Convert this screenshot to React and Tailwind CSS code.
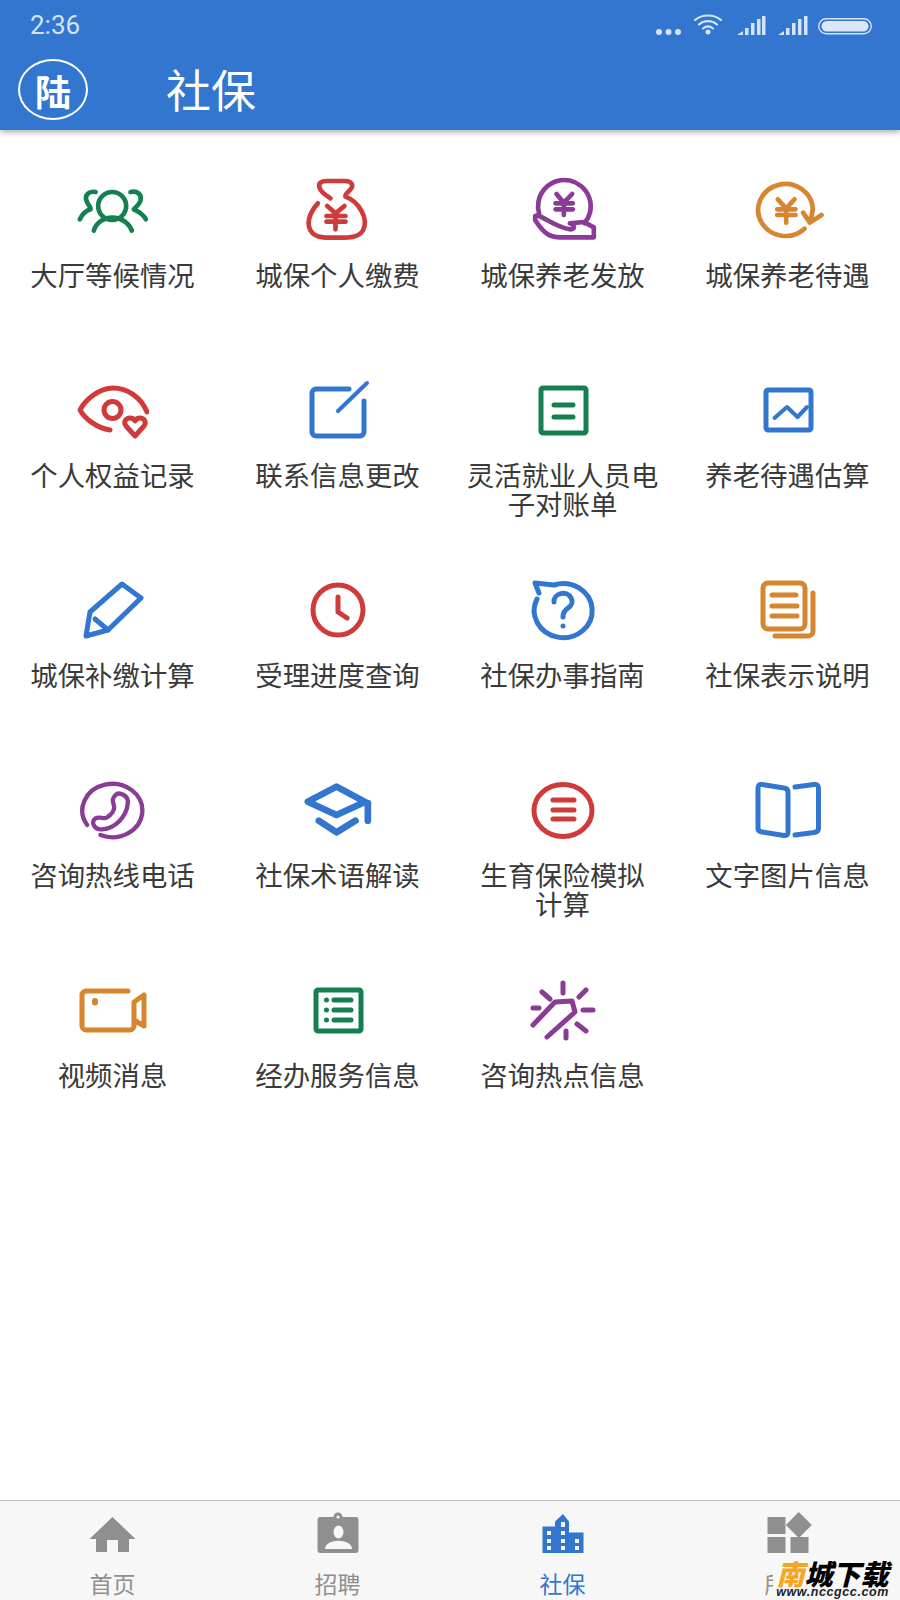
import React from 'react';

const GREEN = '#14804f';
const RED = '#cf3a3a';
const PURPLE = '#8a3b96';
const ORANGE = '#d5862f';
const BLUE = '#3276d0';

const Icon = ({ color, width = 5, box = '0 0 72 72', children }) => (
  <svg
    width="72"
    height="72"
    viewBox={box}
    fill="none"
    stroke={color}
    strokeWidth={width}
    strokeLinecap="round"
    strokeLinejoin="round"
  >
    {children}
  </svg>
);

const items = [
  {
    label: '大厅等候情况',
    icon: (
      <Icon color={GREEN} width={14} box="49.5 15 216 216">
        <circle cx="155" cy="108" r="42" />
        <path d="M100 182C115 130 195 130 214 182" />
        <path d="M105 66C85 62 72 75 78 92C82 105 92 112 90 118C78 122 65 132 58 148" />
        <path d="M210 66C230 62 245 72 240 92C236 105 225 112 220 118C235 125 250 135 256 148" />
      </Icon>
    ),
  },
  {
    label: '城保个人缴费',
    icon: (
      <Icon color={RED} width={14} box="724.5 15 216 216">
        <path d="M772 100C745 130 735 165 755 188C770 205 800 203 830 203C860 203 895 205 908 180C925 145 895 95 855 80C850 70 878 60 875 45C872 32 860 33 850 33H800C780 33 772 40 778 55C782 68 800 78 810 85" />
        <path d="M800 108L825 130L852 108M798 138H855M798 155H855M825 130V178" />
      </Icon>
    ),
  },
  {
    label: '城保养老发放',
    icon: (
      <Icon color={PURPLE} width={14} box="19.5 15 216 216">
        <path d="M56 132A79 79 0 1 1 192 160" />
        <path d="M44 138C60 130 100 172 150 178C165 178 162 164 148 160L190 156L220 172V202H120C90 202 70 192 44 150Z" />
        <path d="M108 72L130 98L155 72M105 100H157M105 118H157M130 98V135" />
      </Icon>
    ),
  },
  {
    label: '城保养老待遇',
    icon: (
      <Icon color={ORANGE} width={14} box="694.5 15 216 216">
        <path d="M852 176A82 78 0 1 1 877 118L870 155" />
        <path d="M848 128L868 158L903 135" />
        <path d="M772 88L797 115L822 88M770 118H825M770 135H825M797 115V158" />
      </Icon>
    ),
  },
  {
    label: '个人权益记录',
    icon: (
      <Icon color={RED}>
        <path d="M70 37C64 22 50 13 36 13C22 13 8 25 3 35C8 44 20 53 33 55" />
        <circle cx="35.5" cy="35" r="8.5" />
        <path d="M58 61L49 51C46 47 49 43 53 43C55 43 57 44 58 46C59 44 61 43 63 43C67 43 70 47 67 51Z" />
      </Icon>
    ),
  },
  {
    label: '联系信息更改',
    icon: (
      <Icon color={BLUE}>
        <path d="M47 14H14A4 4 0 0 0 10 18V57A4 4 0 0 0 14 61H58A4 4 0 0 0 62 57V26" />
        <path d="M65 8L36 36" strokeWidth="4" />
      </Icon>
    ),
  },
  {
    label: '灵活就业人员电\n子对账单',
    icon: (
      <Icon color={GREEN}>
        <rect x="14" y="13" width="45" height="45" rx="2" />
        <path d="M27 30H46M27 42H46" />
      </Icon>
    ),
  },
  {
    label: '养老待遇估算',
    icon: (
      <Icon color={BLUE}>
        <rect x="14" y="15" width="45" height="40" rx="2" />
        <path d="M22.5 43L35 32L45.5 42L55 32" strokeWidth="4" />
      </Icon>
    ),
  },
  {
    label: '城保补缴计算',
    icon: (
      <Icon color={BLUE}>
        <path d="M45 9L64 23L31 55L9 61L13 37Z" />
        <path d="M18 44L31 55" />
      </Icon>
    ),
  },
  {
    label: '受理进度查询',
    icon: (
      <Icon color={RED}>
        <circle cx="36" cy="35" r="25" />
        <path d="M36 22V37L45 43" />
      </Icon>
    ),
  },
  {
    label: '社保办事指南',
    icon: (
      <Icon color={BLUE}>
        <path d="M10 24A29 27 0 1 0 27 10L8 8L12 18" />
        <path d="M27 27A9 8 0 1 1 41 33C38 35 36 37 36 42" />
        <path d="M36 51V51.1" />
      </Icon>
    ),
  },
  {
    label: '社保表示说明',
    icon: (
      <Icon color={ORANGE}>
        <rect x="11" y="8" width="42" height="46" rx="5" />
        <path d="M20 20H44M20 31H45M20 41H45" />
        <path d="M61 18V56A5 5 0 0 1 56 61H23" />
      </Icon>
    ),
  },
  {
    label: '咨询热线电话',
    icon: (
      <Icon color={PURPLE} width={13} box="49.5 15 216 216">
        <path d="M80 165A90 80 0 1 1 120 195" />
        <path d="M165 75C175 65 205 75 202 100C198 140 165 175 125 178C100 180 90 155 105 145C118 138 130 150 140 142C150 135 165 120 160 105C155 92 155 85 165 75Z" />
      </Icon>
    ),
  },
  {
    label: '社保术语解读',
    icon: (
      <Icon color={BLUE} width={20} box="724.5 15 216 216">
        <path d="M922 100L828 50L742 95L828 135L905 100" />
        <path d="M922 100V152" />
        <path d="M775 152L828 187L885 152" />
      </Icon>
    ),
  },
  {
    label: '生育保险模拟\n计算',
    icon: (
      <Icon color={RED}>
        <ellipse cx="36" cy="35.5" rx="29" ry="26" />
        <path d="M26 25H47M26 35H47M26 44H47" strokeWidth="5" />
      </Icon>
    ),
  },
  {
    label: '文字图片信息',
    icon: (
      <Icon color={BLUE}>
        <path d="M6 13Q6 9 10 9.5L32 13Q36 13.5 36 17V57Q36 61 32 60.5L10 57Q6 56.5 6 53Z" />
        <path d="M43 12L62 9.5Q66.5 9 66.5 13V53Q66.5 57 62 57.5L43 60" />
      </Icon>
    ),
  },
  {
    label: '视频消息',
    icon: (
      <Icon color={ORANGE}>
        <path d="M51 16H9A4 4 0 0 0 5 20V51A4 4 0 0 0 9 55H53A4 4 0 0 0 57 51V27L67 20V51L57 45" />
        <path d="M18 26V27.5" strokeWidth="6" />
      </Icon>
    ),
  },
  {
    label: '经办服务信息',
    icon: (
      <Icon color={GREEN}>
        <rect x="14" y="15" width="45" height="41" rx="2" />
        <path d="M24.5 25V25.1M24.5 35V35.1M24.5 45V45.1" />
        <path d="M32 25H49M32 35H49M32 45H49" />
      </Icon>
    ),
  },
  {
    label: '咨询热点信息',
    icon: (
      <Icon color={PURPLE}>
        <path d="M36 8V18M15 17L23 24M59 15L52 22M6 33H12M56 35H66M50 49L59 56M39 56V63" />
        <path d="M6 50L28 27L45 26L48 37L20 62" />
      </Icon>
    ),
  },
];

const HomeTab = ({ color }) => (
  <svg width="50" height="42" viewBox="0 0 50 42" fill={color}>
    <path d="M24.5 5L47.5 27H41V40H30V28H19V40H8V27H1.5Z" />
  </svg>
);

const JobTab = ({ color }) => (
  <svg width="50" height="42" viewBox="0 0 50 42">
    <circle cx="25" cy="5" r="4.5" fill={color} />
    <rect x="4.5" y="5" width="41" height="36" rx="3" fill={color} />
    <circle cx="25" cy="5" r="1.6" fill="#f7f7f7" />
    <ellipse cx="25.5" cy="20" rx="5" ry="6.5" fill="#f7f7f7" />
    <path d="M12 37C12 26 39 26 39 37Z" fill="#f7f7f7" />
  </svg>
);

const BuildingTab = ({ color }) => (
  <svg width="50" height="42" viewBox="0 0 50 42">
    <path d="M25 2L31 9.5V20.5H45.5V41H4.5V14.5H17V9.5Z" fill={color} />
    <g fill="#f7f7f7">
      <rect x="23" y="10" width="4" height="5" />
      <rect x="9" y="19" width="4" height="4" />
      <rect x="23" y="19" width="4" height="4" />
      <rect x="9" y="27" width="4" height="4" />
      <rect x="23" y="27" width="4" height="4" />
      <rect x="37" y="27" width="4" height="4" />
      <rect x="9" y="34" width="4" height="4" />
      <rect x="23" y="34" width="4" height="4" />
      <rect x="37" y="34" width="4" height="4" />
    </g>
  </svg>
);

const AppsTab = ({ color }) => (
  <svg width="50" height="42" viewBox="0 0 50 42" fill={color}>
    <rect x="4.5" y="5" width="18" height="17" />
    <rect x="4.5" y="25" width="18" height="16" />
    <rect x="27.5" y="25" width="18" height="16" />
    <path d="M35.8 0L48.8 13L35.8 26L22.8 13Z" />
  </svg>
);

const tabs = [
  { label: '首页', Tab: HomeTab },
  { label: '招聘', Tab: JobTab },
  { label: '社保', Tab: BuildingTab, active: true },
  { label: '所有', Tab: AppsTab },
];

const StatusIcons = () => (
  <svg width="220" height="24" viewBox="0 0 220 24" className="mr-[24px] mt-[-2px]">
    <g fill="#d5e3f6">
      <circle cx="3" cy="20" r="3" />
      <circle cx="12.5" cy="20" r="3" />
      <circle cx="22" cy="20" r="3" />
      <circle cx="52" cy="20" r="2.5" />
    </g>
    <g fill="none" stroke="#d5e3f6" strokeWidth="2.2" strokeLinecap="round">
      <path d="M39 8C46 2 58 2 65 8" />
      <path d="M43 12.5C48 8 56 8 61 12.5" />
      <path d="M47 16.5C50 14 54 14 57 16.5" />
    </g>
    <g fill="#d5e3f6">
      <path d="M81 23L87 19V23Z" />
      <rect x="89" y="16" width="3.5" height="7" />
      <rect x="95" y="11" width="3.5" height="12" />
      <rect x="101" y="7" width="3.5" height="16" />
      <rect x="106" y="4" width="3.5" height="19" />
      <path d="M122 23L128 19V23Z" />
      <rect x="130" y="16" width="3.5" height="7" />
      <rect x="136" y="11" width="3.5" height="12" />
      <rect x="142" y="7" width="3.5" height="16" />
      <rect x="148" y="4" width="3.5" height="19" />
    </g>
    <rect x="162.7" y="6.7" width="52.6" height="15" rx="7.5" fill="none" stroke="#d5e3f6" strokeWidth="1.4" />
    <rect x="165.5" y="9" width="47" height="10.5" rx="5.2" fill="#dbe6f6" />
  </svg>
);

const Cell = ({ label, icon }) => (
  <div className="h-[200px] flex flex-col items-center pt-[45px]">
    {icon}
    <div className="mt-[13px] text-[27.4px] leading-[29px] text-[#3a3a3a] text-center whitespace-pre-line">
      {label}
    </div>
  </div>
);

export default function App() {
  return (
    <div className="relative w-[900px] h-[1600px] flex flex-col overflow-hidden bg-white font-['Noto_Sans_CJK_SC',sans-serif]">
      <header className="h-[130px] bg-[#3276d0] shadow-[0_2px_6px_rgba(0,0,0,0.35)] z-10">
        <div className="h-[50px] flex items-center justify-between pl-[30px]">
          <span className="text-[26px] text-[#d5e3f6] font-['Roboto',sans-serif]">2:36</span>
          <StatusIcons />
        </div>
        <div className="h-[80px] flex items-start pl-[18px] pt-[9px]">
          <div className="w-[70px] h-[61px] rounded-[50%] border-2 border-white flex items-center justify-center text-[36px] font-bold text-white">
            陆
          </div>
          <h1 className="ml-[78px] text-[45px] leading-[60px] text-white">社保</h1>
        </div>
      </header>

      <main className="flex-1 grid grid-cols-4 content-start">
        {items.map((item) => (
          <Cell key={item.label} label={item.label} icon={item.icon} />
        ))}
      </main>

      <nav className="h-[100px] flex border-t border-[#bdbdbd] bg-[#f7f7f7]">
        {tabs.map(({ label, Tab, active }) => (
          <div key={label} className="flex-1 flex flex-col items-center pt-[11px]">
            <Tab color={active ? BLUE : '#8f8f8f'} />
            <span className={`mt-[14px] text-[23px] leading-[30px] ${active ? 'text-[#3276d0]' : 'text-[#8f8f8f]'}`}>
              {label}
            </span>
          </div>
        ))}
      </nav>

      <div className="absolute right-[11px] bottom-[2px] flex flex-col items-center bg-[#f7f7f7] pl-[3px]">
        <div className="text-[28px] leading-[25px] font-black italic text-black">
          <span className="text-[#f5a623]">南</span>城下载
        </div>
        <div className="text-[12.5px] leading-[12px] font-bold italic tracking-[0.6px] text-[#222222] font-['Liberation_Sans',sans-serif]">
          www.nccgcc.com
        </div>
      </div>
    </div>
  );
}
